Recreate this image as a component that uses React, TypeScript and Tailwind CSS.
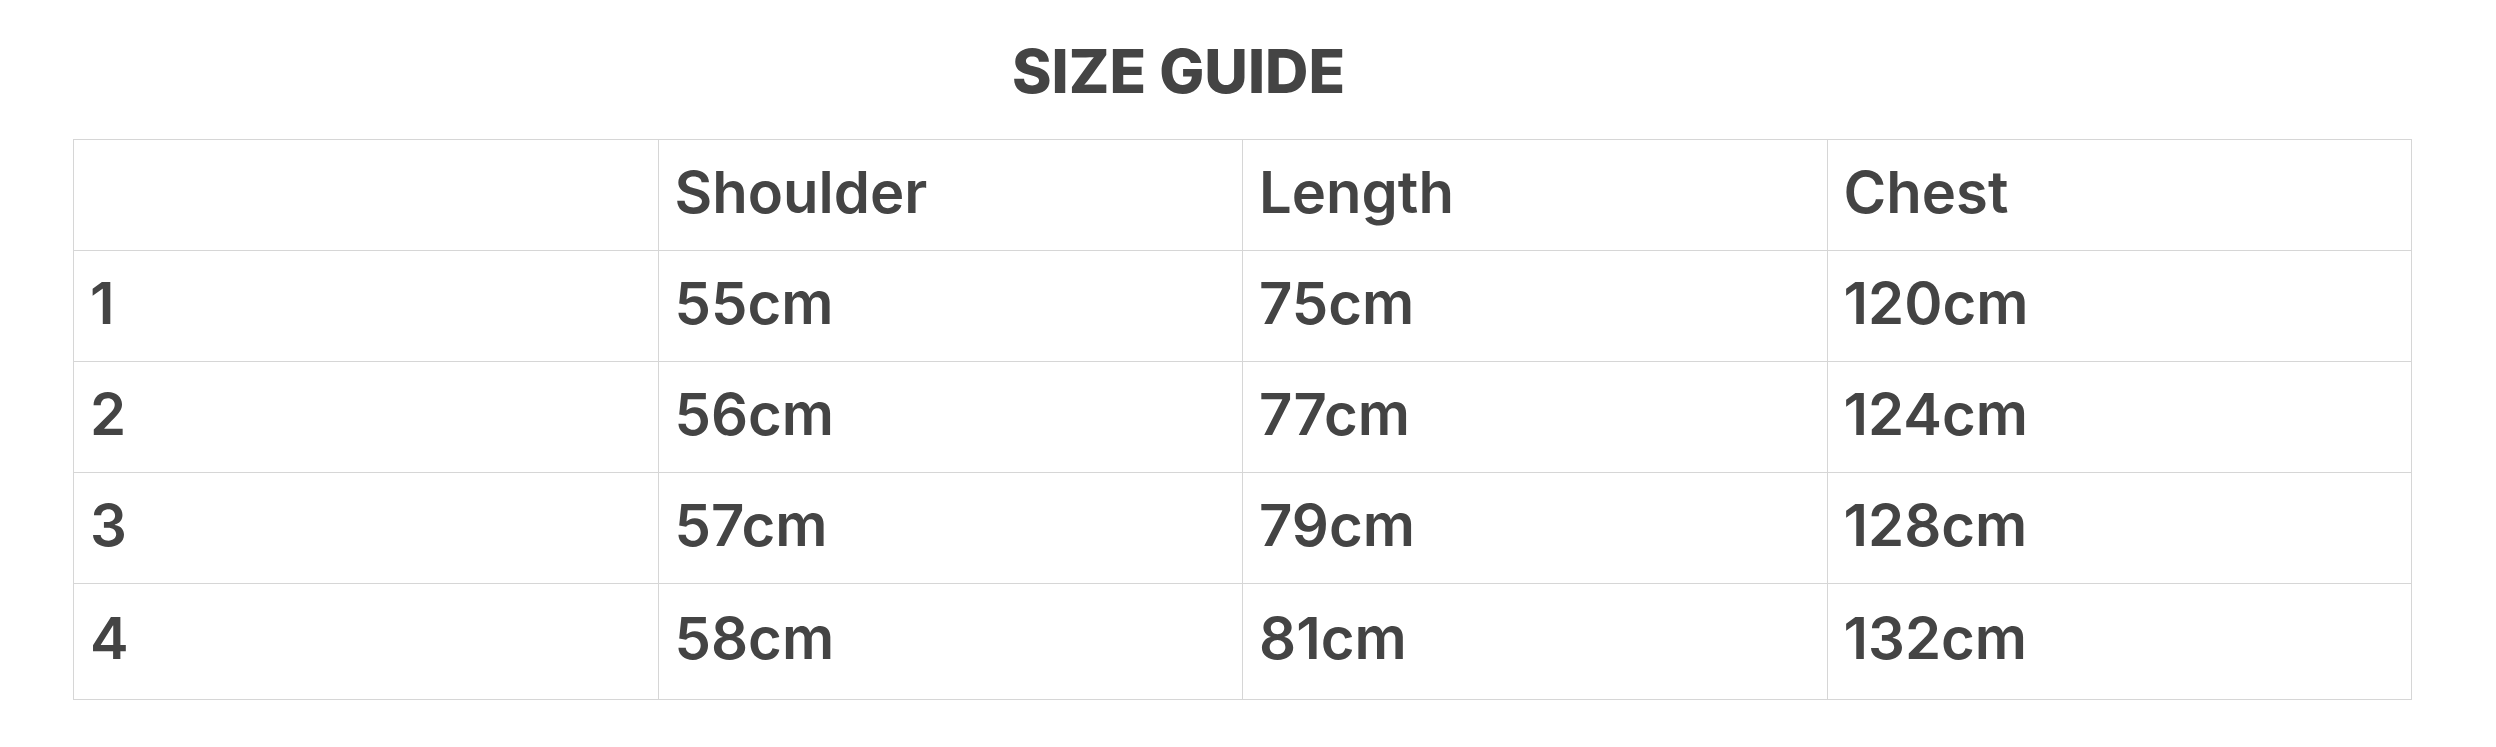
import React from 'react'

const rows = [
  ['1', '55cm', '75cm', '120cm'],
  ['2', '56cm', '77cm', '124cm'],
  ['3', '57cm', '79cm', '128cm'],
  ['4', '58cm', '81cm', '132cm'],
]

const cell = 'border border-[#d6d6d6] px-4 pb-[6px] text-left text-[58px] font-semibold'

const App = () => {
  return (
    <div className="min-h-[747px] w-full bg-white text-[#444444] font-['Inter',_'Liberation_Sans',_sans-serif]">
      <div className="pl-[73px] pt-[41px]">
        {/* title */}
        <div className="w-[2339px] pr-[128px] text-center">
          <h2 className="text-[60px] leading-[60px] font-extrabold">SIZE GUIDE</h2>
        </div>

        {/* table */}
        <table className="mt-[38px] w-[2339px] table-fixed border-collapse">
          <thead>
            <tr>
              <th className={`h-[111px] ${cell}`}></th>
              <th className={`h-[111px] ${cell}`}>Shoulder</th>
              <th className={`h-[111px] ${cell}`}>Length</th>
              <th className={`h-[111px] ${cell}`}>Chest</th>
            </tr>
          </thead>
          <tbody>
            {rows.map((row, i) => (
              <tr key={i} className={i === rows.length - 1 ? 'h-[116px]' : 'h-[111px]'}>
                {row.map((c, j) => (
                  <td key={j} className={cell}>
                    {c}
                  </td>
                ))}
              </tr>
            ))}
          </tbody>
        </table>
      </div>
    </div>
  )
}

export default App
